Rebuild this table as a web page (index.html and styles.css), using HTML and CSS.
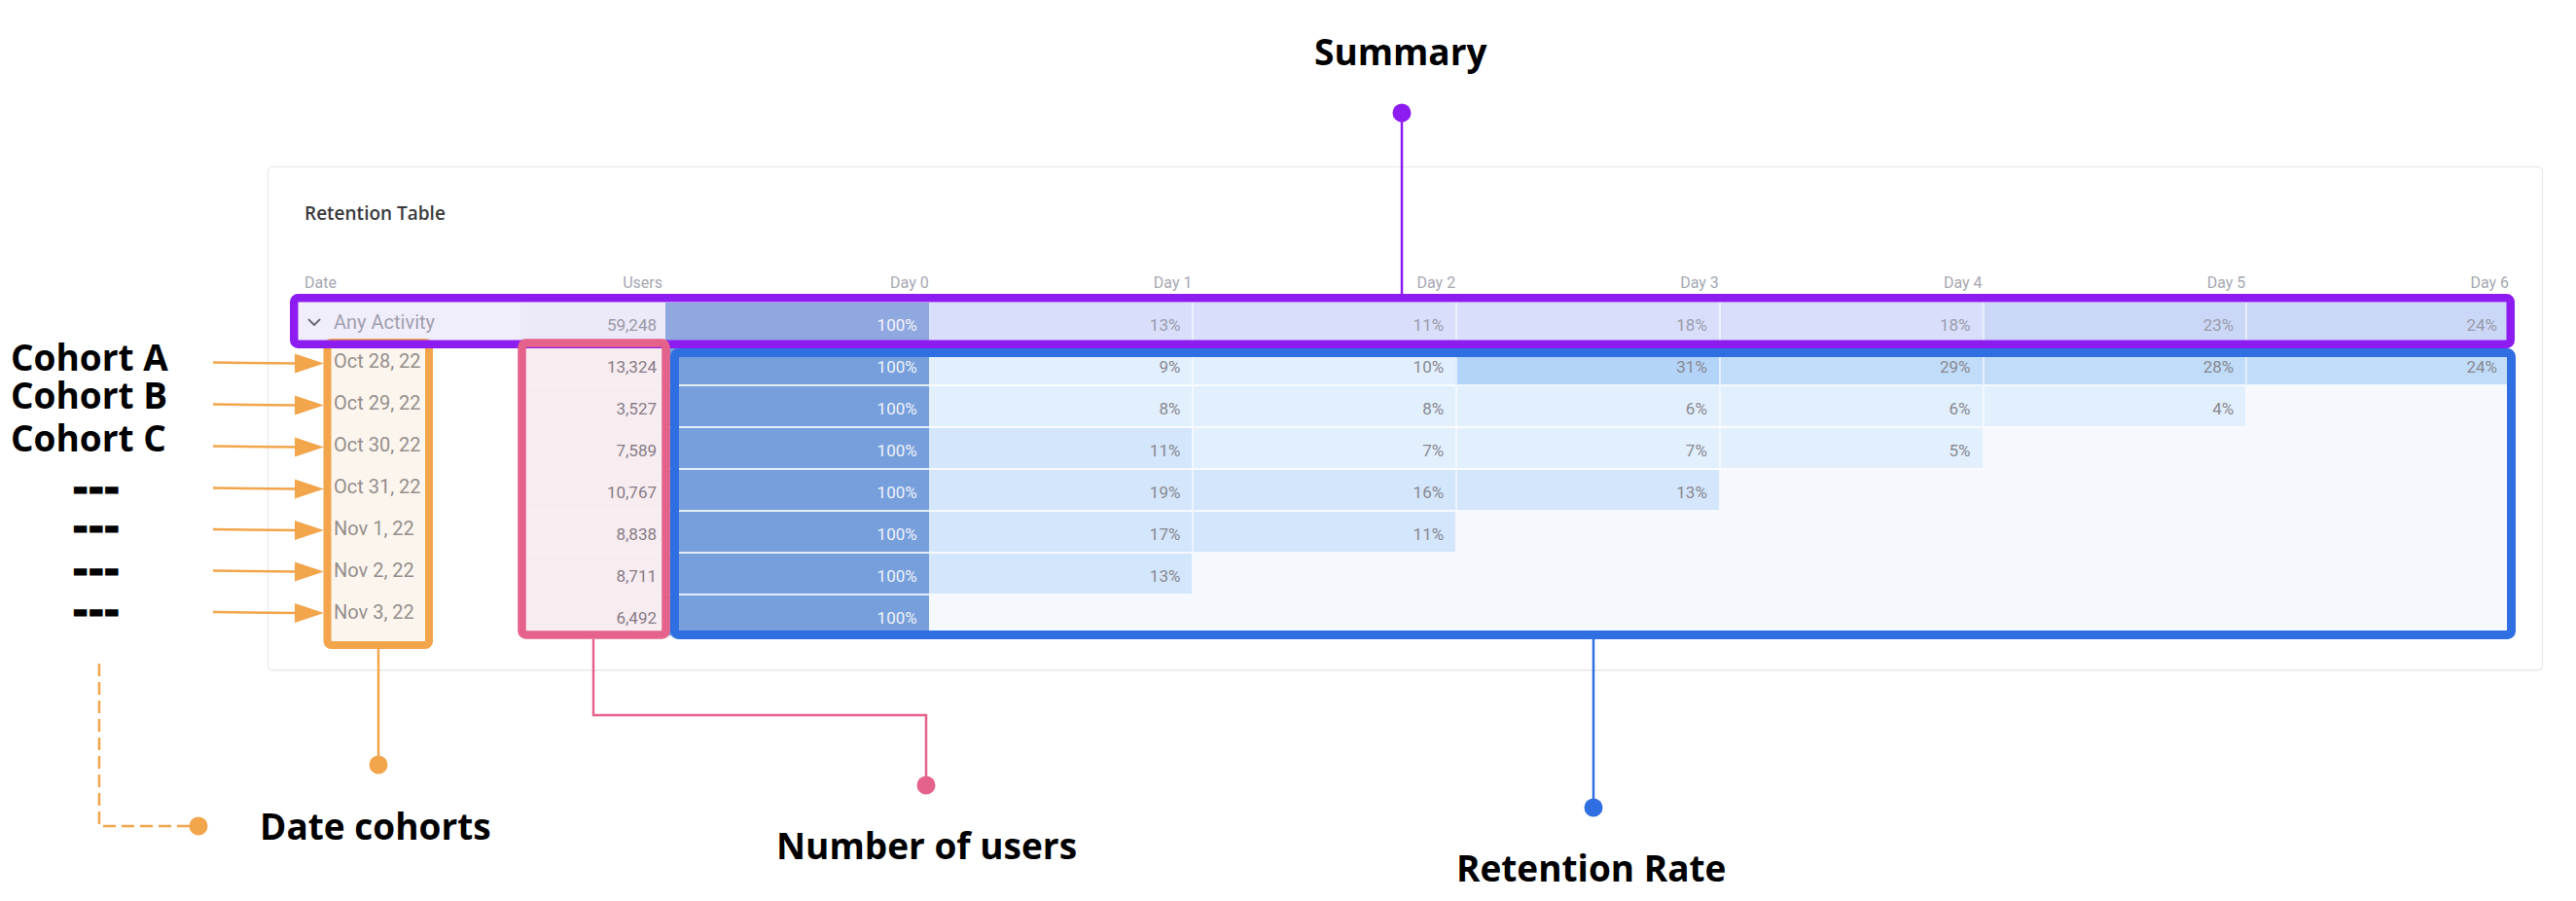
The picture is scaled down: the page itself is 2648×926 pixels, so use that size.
FILE: index.html
```html
<!DOCTYPE html>
<html lang="en">
<head>
<meta charset="utf-8">
<title>Retention Table – annotated</title>
<link rel="stylesheet" href="styles.css">
</head>
<body>
<div class="canvas">
  <section class="card">
    <h2 class="card-title">Retention Table</h2>
    <div class="rt">
      <div class="rt-row rt-head">
        <div class="hc hc-date">Date</div>
        <div class="hc hc-num">Users</div>
        <div class="hc hc-day">Day 0</div>
        <div class="hc hc-day">Day 1</div>
        <div class="hc hc-day">Day 2</div>
        <div class="hc hc-day">Day 3</div>
        <div class="hc hc-day">Day 4</div>
        <div class="hc hc-day">Day 5</div>
        <div class="hc hc-day">Day 6</div>
      </div>
      <div class="rt-row rt-sum">
        <div class="c c-date sum-date"><span class="sum-label"><svg class="chev" width="14" height="9" viewBox="0 0 14 9"><path d="M1.5 1.5 L7 7 L12.5 1.5" fill="none" stroke="#6d6d78" stroke-width="2" stroke-linecap="round" stroke-linejoin="round"/></svg>Any Activity</span></div>
        <div class="c c-users sum-users">59,248</div>
        <div class="c c-day s0">100%</div>
        <div class="c c-day s1">13%</div>
        <div class="c c-day s1">11%</div>
        <div class="c c-day s1">18%</div>
        <div class="c c-day s1">18%</div>
        <div class="c c-day s2">23%</div>
        <div class="c c-day s2">24%</div>
      </div>
      <div class="rt-row">
        <div class="c c-date">Oct 28, 22</div>
        <div class="c c-users">13,324</div>
        <div class="c c-day d0">100%</div>
        <div class="c c-day l1">9%</div>
        <div class="c c-day l1">10%</div>
        <div class="c c-day l4">31%</div>
        <div class="c c-day l3">29%</div>
        <div class="c c-day l3">28%</div>
        <div class="c c-day l3">24%</div>
      </div>
      <div class="rt-row">
        <div class="c c-date">Oct 29, 22</div>
        <div class="c c-users">3,527</div>
        <div class="c c-day d0">100%</div>
        <div class="c c-day l1">8%</div>
        <div class="c c-day l1">8%</div>
        <div class="c c-day l1">6%</div>
        <div class="c c-day l1">6%</div>
        <div class="c c-day l1">4%</div>
        <div class="c c-day e"></div>
      </div>
      <div class="rt-row">
        <div class="c c-date">Oct 30, 22</div>
        <div class="c c-users">7,589</div>
        <div class="c c-day d0">100%</div>
        <div class="c c-day l2">11%</div>
        <div class="c c-day l1">7%</div>
        <div class="c c-day l1">7%</div>
        <div class="c c-day l1">5%</div>
        <div class="c c-day e"></div>
        <div class="c c-day e"></div>
      </div>
      <div class="rt-row">
        <div class="c c-date">Oct 31, 22</div>
        <div class="c c-users">10,767</div>
        <div class="c c-day d0">100%</div>
        <div class="c c-day l2">19%</div>
        <div class="c c-day l2">16%</div>
        <div class="c c-day l2">13%</div>
        <div class="c c-day e"></div>
        <div class="c c-day e"></div>
        <div class="c c-day e"></div>
      </div>
      <div class="rt-row">
        <div class="c c-date">Nov 1, 22</div>
        <div class="c c-users">8,838</div>
        <div class="c c-day d0">100%</div>
        <div class="c c-day l2">17%</div>
        <div class="c c-day l2">11%</div>
        <div class="c c-day e"></div>
        <div class="c c-day e"></div>
        <div class="c c-day e"></div>
        <div class="c c-day e"></div>
      </div>
      <div class="rt-row">
        <div class="c c-date">Nov 2, 22</div>
        <div class="c c-users">8,711</div>
        <div class="c c-day d0">100%</div>
        <div class="c c-day l2">13%</div>
        <div class="c c-day e"></div>
        <div class="c c-day e"></div>
        <div class="c c-day e"></div>
        <div class="c c-day e"></div>
        <div class="c c-day e"></div>
      </div>
      <div class="rt-row">
        <div class="c c-date">Nov 3, 22</div>
        <div class="c c-users">6,492</div>
        <div class="c c-day d0">100%</div>
        <div class="c c-day e"></div>
        <div class="c c-day e"></div>
        <div class="c c-day e"></div>
        <div class="c c-day e"></div>
        <div class="c c-day e"></div>
        <div class="c c-day e"></div>
      </div>
    </div>
  </section>

  <svg class="annot" width="2648" height="926" viewBox="0 0 2648 926">
    <!-- date cohorts (orange) -->
    <rect x="336.5" y="352" width="104.5" height="311" rx="4" fill="rgba(225,155,85,0.1)" stroke="#f2a54b" stroke-width="8"/>
    <line x1="389" y1="667" x2="389" y2="786" stroke="#f2a54b" stroke-width="2.5"/>
    <circle cx="389" cy="786" r="9.5" fill="#f2a54b"/>
    <g stroke="#f2a54b" stroke-width="2.5" fill="#f2a54b">
      <line x1="219" y1="372.5" x2="306" y2="373.5"/><polygon stroke="none" points="303,363.5 333,373.5 303,383.5"/>
      <line x1="219" y1="415.5" x2="306" y2="416.5"/><polygon stroke="none" points="303,406.5 333,416.5 303,426.5"/>
      <line x1="219" y1="458.5" x2="306" y2="459.5"/><polygon stroke="none" points="303,449.5 333,459.5 303,469.5"/>
      <line x1="219" y1="501.5" x2="306" y2="502.5"/><polygon stroke="none" points="303,492.5 333,502.5 303,512.5"/>
      <line x1="219" y1="544" x2="306" y2="545"/><polygon stroke="none" points="303,535 333,545 303,555"/>
      <line x1="219" y1="586.5" x2="306" y2="587.5"/><polygon stroke="none" points="303,577.5 333,587.5 303,597.5"/>
      <line x1="219" y1="629" x2="306" y2="630"/><polygon stroke="none" points="303,620 333,630 303,640"/>
    </g>
    <path d="M102 682 V849 H198" fill="none" stroke="#f2a54b" stroke-width="2.5" stroke-dasharray="13 6"/>
    <circle cx="204" cy="849" r="9.5" fill="#f2a54b"/>

    <!-- summary (purple) -->
    <rect x="302.25" y="306.25" width="2278.5" height="47.5" rx="4" fill="none" stroke="#8d1cf0" stroke-width="8.5"/>
    <line x1="1441" y1="116" x2="1441" y2="302" stroke="#8d1cf0" stroke-width="2.5"/>
    <circle cx="1441" cy="116" r="9.5" fill="#8d1cf0"/>

    <!-- number of users (pink) -->
    <rect x="536.5" y="352.5" width="148" height="300" rx="4" fill="rgba(200,100,135,0.11)" stroke="#e5628a" stroke-width="8.5"/>
    <path d="M610 657 V735 H952 V807" fill="none" stroke="#e5628a" stroke-width="2.5"/>
    <circle cx="952" cy="807" r="9.5" fill="#e5628a"/>

    <!-- retention rate (blue) -->
    <rect x="693.5" y="362.5" width="1888" height="290" rx="4" fill="none" stroke="#2f6fe1" stroke-width="9"/>
    <line x1="1638" y1="657" x2="1638" y2="830" stroke="#2f6fe1" stroke-width="2.5"/>
    <circle cx="1638" cy="830" r="9.5" fill="#2f6fe1"/>
  </svg>

  <div class="lbl lbl-summary">Summary</div>
  <div class="lbl lbl-ca">Cohort A</div>
  <div class="lbl lbl-cb">Cohort B</div>
  <div class="lbl lbl-cc">Cohort C</div>
  <div class="lbl dash dash-1">---</div>
  <div class="lbl dash dash-2">---</div>
  <div class="lbl dash dash-3">---</div>
  <div class="lbl dash dash-4">---</div>
  <div class="lbl lbl-dates">Date cohorts</div>
  <div class="lbl lbl-users">Number of users</div>
  <div class="lbl lbl-rate">Retention Rate</div>
</div>
</body>
</html>
```

FILE: styles.css
```css
html, body {
  margin: 0;
  padding: 0;
  background: #ffffff;
}

.canvas {
  position: relative;
  width: 2648px;
  height: 926px;
  box-sizing: border-box;
  padding: 171px 0 0 275px;
  overflow: hidden;
  font-family: Roboto, "Liberation Sans", sans-serif;
}

/* ---------- card ---------- */
.card {
  width: 2339px;
  box-sizing: border-box;
  border: 1px solid #e6e6ec;
  border-radius: 5px;
  box-shadow: 0 1px 1px rgba(0, 0, 0, 0.05);
  padding: 34px 34px 33px 31px;
  background: #ffffff;
}

.card-title {
  margin: 0 0 47px 0;
  padding-left: 6px;
  font-family: "Open Sans", Roboto, sans-serif;
  font-weight: 600;
  font-size: 19px;
  line-height: 26px;
  color: #3a3a3d;
}

/* ---------- table ---------- */
.rt-row {
  display: grid;
  grid-template-columns: 228px 149px repeat(7, 1fr);
}

.rt-head {
  height: 32px;
  font-size: 16px;
  line-height: 24px;
  color: #a6a8b2;
}

.hc-date { padding-left: 6px; }
.hc-num { text-align: right; padding-right: 3px; }
.hc-day { text-align: right; }

.c {
  height: 43px;
  box-sizing: border-box;
  border-bottom: 2px solid rgba(255, 255, 255, 0.8);
  padding-top: 13px;
  font-size: 17px;
  line-height: 20px;
  color: #88898f;
  white-space: nowrap;
}

.c-date {
  padding-top: 5px;
  padding-left: 36px;
  font-size: 20px;
  line-height: 24px;
  color: #8d8e93;
}

.c-users {
  text-align: right;
  padding-right: 9px;
  background: #fdfdfd;
  color: #7f8086;
}

.c-day {
  text-align: right;
  padding-right: 12px;
}

.c-day:nth-child(n+5) {
  border-left: 2px solid rgba(255, 255, 255, 0.55);
}

/* summary row */
.sum-date {
  padding-top: 8px;
  padding-left: 9px;
  background: #f1eefb;
  color: #a09fae;
}

.sum-label {
  display: flex;
  align-items: center;
  gap: 13px;
  height: 24px;
}

.chev { display: block; }

.sum-users {
  background: #ece9f8;
  color: #9a9aa6;
}

.s0 { background: #90a8e0; color: #f3f5fc; }
.s1 { background: #d9dffa; color: #9a9cab; }
.s2 { background: #cbd7f7; color: #9a9cab; }

/* data cells */
.d0 { background: #779fdb; color: #eef3fb; }
.l1 { background: #e2effd; }
.l2 { background: #d3e6fb; }
.l3 { background: #c1dcf9; }
.l4 { background: #b3d3f8; }

.e {
  background: #f5f9fe;
  border-color: transparent;
}
.c-day.e:nth-child(n+5) { border-left-color: transparent; }

/* ---------- annotations ---------- */
.annot {
  position: absolute;
  left: 0;
  top: 0;
  pointer-events: none;
}

.lbl {
  position: absolute;
  font-family: "Open Sans", "Liberation Sans", sans-serif;
  font-weight: 700;
  font-size: 37px;
  line-height: 37px;
  color: #000000;
  white-space: nowrap;
}

.lbl-summary { left: 1351px; top: 34px; }
.lbl-ca { left: 11px; top: 348px; }
.lbl-cb { left: 11px; top: 387px; }
.lbl-cc { left: 11px; top: 431px; }
.lbl-dates { left: 267px; top: 830px; }
.lbl-users { left: 798px; top: 850px; }
.lbl-rate { left: 1497px; top: 873px; }

.dash {
  left: 77px;
  font-weight: 800;
  font-size: 28px;
  line-height: 16px;
  letter-spacing: 4px;
  -webkit-text-stroke: 3px #000000;
  transform: scaleX(1.25);
  transform-origin: left center;
}
.dash-1 { top: 492px; }
.dash-2 { top: 532px; }
.dash-3 { top: 576px; }
.dash-4 { top: 618px; }
```
